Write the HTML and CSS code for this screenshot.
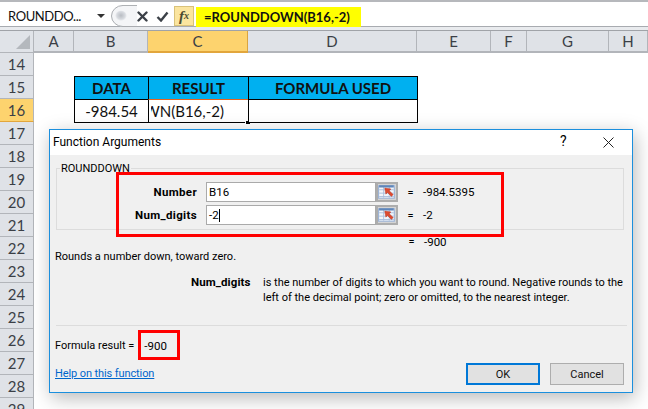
FILE: index.html
```html
<!DOCTYPE html>
<html lang="en">
<head>
<meta charset="utf-8">
<title>Function Arguments</title>
<link rel="stylesheet" href="styles.css">
</head>
<body>
<div class="app">
  <div class="fbar">
    <div class="namebox"><span class="name">ROUNDDO...</span><svg class="caret" width="8" height="4" viewBox="0 0 8 4"><path d="M0 0h8L4 4z" fill="#333"/></svg></div>
    <div class="fbtns">
      <svg class="knob" width="26" height="22" viewBox="0 0 26 24" preserveAspectRatio="none"><defs><radialGradient id="kn" cx=".5" cy=".45" r=".5"><stop offset="0" stop-color="#b8bcc2"/><stop offset=".7" stop-color="#d8dbe0"/><stop offset="1" stop-color="#f4f5f7"/></radialGradient></defs><path d="M26 .5H12a11.500 11.500 0 0 0 0 23h14" fill="#f4f5f7" stroke="#a6a9ae"/><circle cx="10" cy="12" r="6" fill="url(#kn)"/></svg>
      <svg class="ico-x" width="11" height="11" viewBox="0 0 11 11"><path d="M1.500 1.500l8 8M9.500 1.500l-8 8" stroke="#3c4148" stroke-width="2.400" stroke-linecap="round"/></svg>
      <svg class="ico-ok" width="13" height="11" viewBox="0 0 13 11"><path d="M1.500 6l3.500 3.500L11.500 1.500" fill="none" stroke="#3c4148" stroke-width="2.400"/></svg>
      <div class="fx">f<sub>x</sub></div>
    </div>
    <div class="formula">=ROUNDDOWN(B16,-2)</div>
  </div>
  <div class="sheet">
    <div class="corner"><svg width="14" height="14" viewBox="0 0 14 14"><path d="M14 0v14H0z" fill="#b4b8bd"/></svg></div>
    <div class="ch">A</div><div class="ch">B</div><div class="ch sel">C</div><div class="ch">D</div><div class="ch">E</div><div class="ch">F</div><div class="ch">G</div><div class="ch">H</div>
    <div class="rh r14">14</div><div class="rh r15">15</div><div class="rh rs r16">16</div><div class="rh r17">17</div><div class="rh r18">18</div><div class="rh r19">19</div><div class="rh r20">20</div><div class="rh r21">21</div><div class="rh r22">22</div><div class="rh r23">23</div><div class="rh r24">24</div><div class="rh r25">25</div><div class="rh r26">26</div><div class="rh r27">27</div><div class="rh r28">28</div><div class="rh r29">29</div>
    <div class="th tb">DATA</div><div class="th tc">RESULT</div><div class="th td">FORMULA USED</div>
    <div class="cell tb num">-984.54</div>
    <div class="cell tc active"><span class="clip"><span>=ROUNDDOWN(B16,-2)</span></span><i class="handle"></i></div>
    <div class="cell td"></div>
  </div>

  <div class="dialog">
    <div class="title"><span>Function Arguments</span><span class="q">?</span><svg class="close" width="11" height="11" viewBox="0 0 11 11"><path d="M.5.5l10 10M10.500.5l-10 10" stroke="#222" stroke-width="1"/></svg></div>
    <div class="dbody">
      <fieldset class="group">
        <legend>ROUNDDOWN</legend>
        <div class="arg"><label>Number</label><div class="input">B16</div><div class="pick"><svg width="18" height="16" viewBox="0 0 16 14"><use href="#picker"/></svg></div><span class="eq">=</span><span class="val">-984.5395</span></div>
        <div class="arg"><label>Num_digits</label><div class="input">-2<i class="caretline"></i></div><div class="pick"><svg width="18" height="16" viewBox="0 0 16 14"><use href="#picker"/></svg></div><span class="eq">=</span><span class="val">-2</span></div>
      </fieldset>
      <div class="resline"><span class="eq">=</span><span class="val">-900</span></div>
      <p class="desc">Rounds a number down, toward zero.</p>
      <div class="help"><b>Num_digits</b><p>is the number of digits to which you want to round. Negative rounds to the left of the decimal point; zero or omitted, to the nearest integer.</p></div>
      <div class="rule"></div>
      <div class="foot">
        <div class="footl">
          <div class="fres"><span>Formula result =</span><span class="fval">-900</span></div>
          <a class="link" href="#">Help on this function</a>
        </div>
        <div class="btns"><div class="btn def">OK</div><div class="btn">Cancel</div></div>
      </div>
    </div>
  </div>
  <div class="mark m1"></div>
  <div class="mark m2"></div>
  <svg class="defs" width="0" height="0"><defs><g id="picker"><rect x=".5" y="1.500" width="14" height="11" fill="#f2f5fa" stroke="#9db4d6"/><path d="M1 5h13M1 8h13M1 11h13M5 2v10M10 2v10" stroke="#a9bddb" stroke-width=".8"/><rect x="1" y="1" width="13" height="2" fill="#5f86ba"/><path d="M6 3.500l5.500 .8-1.500 1.500 3.500 3.500-1.600 1.600L8.400 7.400 7 8.900z" fill="#dc4a30" stroke="#b53420" stroke-width=".4"/></g></defs></svg>
</div>
</body>
</html>
```
FILE: styles.css
```css
* { box-sizing: border-box; }
html, body { margin: 0; padding: 0; background: #fff; }
.app { position: relative; width: 648px; height: 409px; overflow: hidden; font-family: Roboto, "Liberation Sans", sans-serif; color: #111; }

.fbar { height: 31px; display: flex; align-items: flex-start; background: #fff; border-top: 2px solid #b6b8bc; border-bottom: 1px solid #a0a3a8; box-shadow: inset 0 -3px 0 #e9ebee, inset 0 -4px 0 #a8abb0; position: relative; }
.namebox { width: 110px; height: 24px; margin-top: 2px; display: flex; align-items: center; padding-left: 8px; font: 13px Lato, sans-serif; }
.name { width: 89px; letter-spacing: -.4px; }
.fbtns { width: 86px; height: 24px; margin-top: 2px; display: flex; align-items: center; }
.knob { margin-left: 1px; }
.ico-ok { margin-left: 8px; }
.fx { width: 20px; height: 20px; margin-left: 5px; background: #fbe59f; border: 1px solid #d9c27a; font: italic bold 15px "Liberation Serif", serif; color: #4a4a30; display: flex; align-items: center; justify-content: center; }
.fx sub { font-size: 10px; vertical-align: -1px; line-height: 0; }
.formula { width: 165px; height: 20px; margin-top: 5px; background: #ffff00; font: bold 13px Lato, sans-serif; color: #111; padding-left: 8px; line-height: 20px; }

.sheet { display: grid; grid-template-columns: 34px 40px 74px 100px 169px 74px 36px 82px 39px; grid-template-rows: 22px repeat(16, 23px); }
.corner { background: #e0e3e8; border-right: 1px solid #b2b5ba; border-bottom: 1px solid #b2b5ba; display: flex; align-items: flex-end; justify-content: flex-end; padding: 0 3px 3px 0; }
.ch { background: #dfe2e7; border-right: 1px solid #b2b5ba; border-bottom: 2px solid #b2b5ba; font: 15px Lato, sans-serif; color: #3b3f46; display: flex; align-items: center; justify-content: center; }
.ch.sel { background: #fdd36e; border-right-color: #d9a441; border-bottom-color: #e2a63c; }
.rh { grid-column: 1; background: #dfe2e7; border-right: 1px solid #b2b5ba; border-bottom: 1px solid #b2b5ba; font: 15px Lato, sans-serif; color: #3b3f46; display: flex; align-items: center; justify-content: center; }
.rs { background: #fdd36e; border-bottom-color: #e2a63c; }
.r14 { grid-row: 2; } .r15 { grid-row: 3; } .r16 { grid-row: 4; } .r17 { grid-row: 5; } .r18 { grid-row: 6; } .r19 { grid-row: 7; } .r20 { grid-row: 8; } .r21 { grid-row: 9; } .r22 { grid-row: 10; } .r23 { grid-row: 11; } .r24 { grid-row: 12; } .r25 { grid-row: 13; } .r26 { grid-row: 14; } .r27 { grid-row: 15; } .r28 { grid-row: 16; } .r29 { grid-row: 17; }

.th, .cell { font: 15px Lato, sans-serif; color: #111; display: flex; align-items: center; justify-content: center; border: 1px solid #000; margin: 0 -1px -1px 0; position: relative; overflow: hidden; }
.th { grid-row: 3; background: #00b0f0; font-weight: bold; }
.cell { grid-row: 4; background: #fff; }
.tb { grid-column: 3; } .tc { grid-column: 4; } .td { grid-column: 5; }
.active { justify-content: flex-start; padding-left: 2px; overflow: visible; border-top: 1px solid #e8641e; white-space: nowrap; }
.clip { display: flex; justify-content: flex-end; width: 73px; overflow: hidden; }
.clip span { flex: none; }
.handle { position: absolute; right: -3px; bottom: -3px; width: 6px; height: 5px; background: #000; border: 1px solid #fff; }

.dialog { position: absolute; left: 49px; top: 129px; width: 584px; height: 264px; background: #f0f0f0; border: 1px solid #1b8fdd; box-shadow: 2px 5px 18px rgba(0,0,0,.28); display: flex; flex-direction: column; font: 11px Roboto, sans-serif; color: #000; }
.title { height: 25px; flex: none; background: #fff; display: flex; align-items: center; padding: 0 0 2px 3px; font-size: 12px; position: relative; }
.q { position: absolute; left: 510px; top: 3px; font-size: 14px; }
.close { position: absolute; left: 553px; top: 7px; }
.dbody { flex: 1; padding: 8px 8px 0 5px; display: flex; flex-direction: column; }
.group { margin: 0 0 0 1px; padding: 9px 0 0 0; height: 67px; border: 1px solid #dcdcdc; width: 568px; flex: none; }
.group legend { padding: 0 1px; margin-left: 3px; line-height: 12px; height: 10px; }
.arg { display: flex; align-items: center; height: 20px; margin-bottom: 3px; }
.arg label { width: 140px; text-align: right; font-weight: bold; font-size: 11.5px; letter-spacing: .35px; }
.input { width: 170px; height: 20px; margin-left: 9px; background: #fff; border: 1px solid #aaa; line-height: 18px; padding-left: 2px; font-size: 11.5px; }
.caretline { display: inline-block; width: 1px; height: 13px; background: #000; vertical-align: -3px; }
.pick { width: 22px; height: 20px; background: #d4d4d4; border: 2px solid #adadad; display: flex; align-items: center; justify-content: center; }
.eq { width: 13px; text-align: center; }
.arg .eq { margin-left: 6px; }
.val { margin-left: 6px; font-size: 11.5px; }
.resline { display: flex; margin: 5px 0 0 350px; height: 14px; line-height: 14px; }
.desc { margin: 0; height: 16px; line-height: 16px; }
.help { display: flex; margin: 10px 0 0 136px; line-height: 15px; }
.help b { width: 64px; flex: none; font-size: 11.5px; letter-spacing: .1px; }
.help p { margin: 0 0 0 8px; width: 366px; }
.rule { height: 1px; background: #dcdcdc; margin: 20px 0 0 1px; width: 571px; flex: none; }
.foot { display: flex; justify-content: space-between; flex: 1; }
.fres { display: flex; align-items: center; height: 29px; margin-top: 5px; gap: 10px; }
.fval { font-size: 11.5px; }
.link { display: block; margin-top: 7px; color: #0066cc; text-decoration: underline; line-height: 14px; letter-spacing: -.1px; }
.btns { display: flex; gap: 10px; margin-top: 37px; }
.btn { width: 74px; height: 22px; background: #e1e1e1; border: 1px solid #adadad; color: #111; display: flex; align-items: center; justify-content: center; }
.btn.def { border: 2px solid #0078d7; }

.mark { position: absolute; border: 3px solid #f00; }
.m1 { left: 116px; top: 172px; width: 388px; height: 65px; }
.m2 { left: 138px; top: 330px; width: 42px; height: 30px; }
.defs { position: absolute; }
```
